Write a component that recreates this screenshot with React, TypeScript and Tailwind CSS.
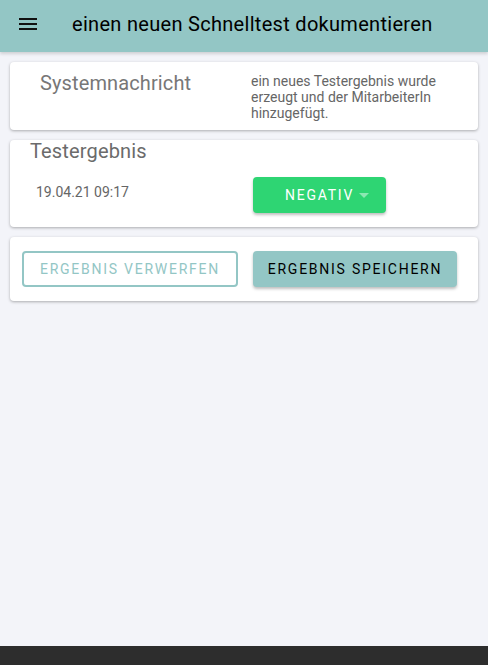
import React from "react";

export default function App() {
  return (
    <div
      className="min-h-screen flex flex-col bg-[#f3f4f9]"
      style={{ fontFamily: "Roboto, 'Liberation Sans', sans-serif" }}
    >
      <header className="h-[52px] bg-[#93c6c5] flex items-start pt-[10px] shadow-[0_2px_3px_rgba(0,0,0,0.15)] relative z-10">
        <div className="w-[72px] pl-4 pt-[2px] flex items-center">
          <svg width="24" height="24" viewBox="0 0 24 24" fill="#111">
            <path d="M3 18h18v-2H3v2zm0-5h18v-2H3v2zm0-7v2h18V6H3z" />
          </svg>
        </div>
        <h1 className="text-[20px] leading-[28px] tracking-[0.3px] text-black font-normal">
          einen neuen Schnelltest dokumentieren
        </h1>
      </header>

      <main className="px-[10px] pt-[10px] flex flex-col gap-[10px]">
        <section className="bg-white rounded-[4px] shadow-[0_1px_3px_rgba(0,0,0,0.3)] flex h-[68px]">
          <div className="w-[241px] pl-[30px] pt-[9px]">
            <div className="text-[20px] leading-[24px] tracking-[0.12px] text-[#777]">
              Systemnachricht
            </div>
          </div>
          <div className="flex-1 pr-[20px] pt-[11px] text-[14px] leading-[16px] text-[#666]">
            ein neues Testergebnis wurde
            <br />
            erzeugt und der MitarbeiterIn
            <br />
            hinzugefügt.
          </div>
        </section>

        <section className="bg-white rounded-[4px] shadow-[0_1px_3px_rgba(0,0,0,0.3)] pb-[14px]">
          <div className="pl-[20px] text-[20px] leading-[24px] tracking-[0.15px] text-[#6b6b6b] -mt-[1px]">
            Testergebnis
          </div>
          <div className="flex mt-[14px]">
            <div className="w-[243px] pl-[26px] pt-[5px] text-[14px] leading-[20px] text-[#666]">
              19.04.21 09:17
            </div>
            <button className="w-[133px] h-[36px] rounded-[4px] bg-[#2ed573] shadow-[0_2px_3px_rgba(0,0,0,0.25)] flex items-center pl-[32px] gap-[5px] text-white text-[14px] tracking-[1.75px]">
              <span>NEGATIV</span>
              <svg width="10" height="5" viewBox="0 0 10 5">
                <path d="M0 0h10L5 5z" fill="rgba(255,255,255,0.45)" />
              </svg>
            </button>
          </div>
        </section>

        <section className="bg-white rounded-[4px] shadow-[0_1px_3px_rgba(0,0,0,0.3)] flex items-center py-[14px] pl-[12px]">
          <button className="w-[216px] h-[36px] rounded-[4px] border-2 border-[#93c6c5] text-[#93c6c5] text-[14px] tracking-[1.75px] flex items-center justify-center">
            ERGEBNIS VERWERFEN
          </button>
          <button className="ml-[15px] w-[204px] h-[36px] rounded-[4px] bg-[#93c6c5] text-black text-[14px] tracking-[1.75px] shadow-[0_2px_3px_rgba(0,0,0,0.25)] flex items-center justify-center">
            ERGEBNIS SPEICHERN
          </button>
        </section>
      </main>

      <footer className="mt-auto h-[19px] bg-[#2d2d2d]" />
    </div>
  );
}
